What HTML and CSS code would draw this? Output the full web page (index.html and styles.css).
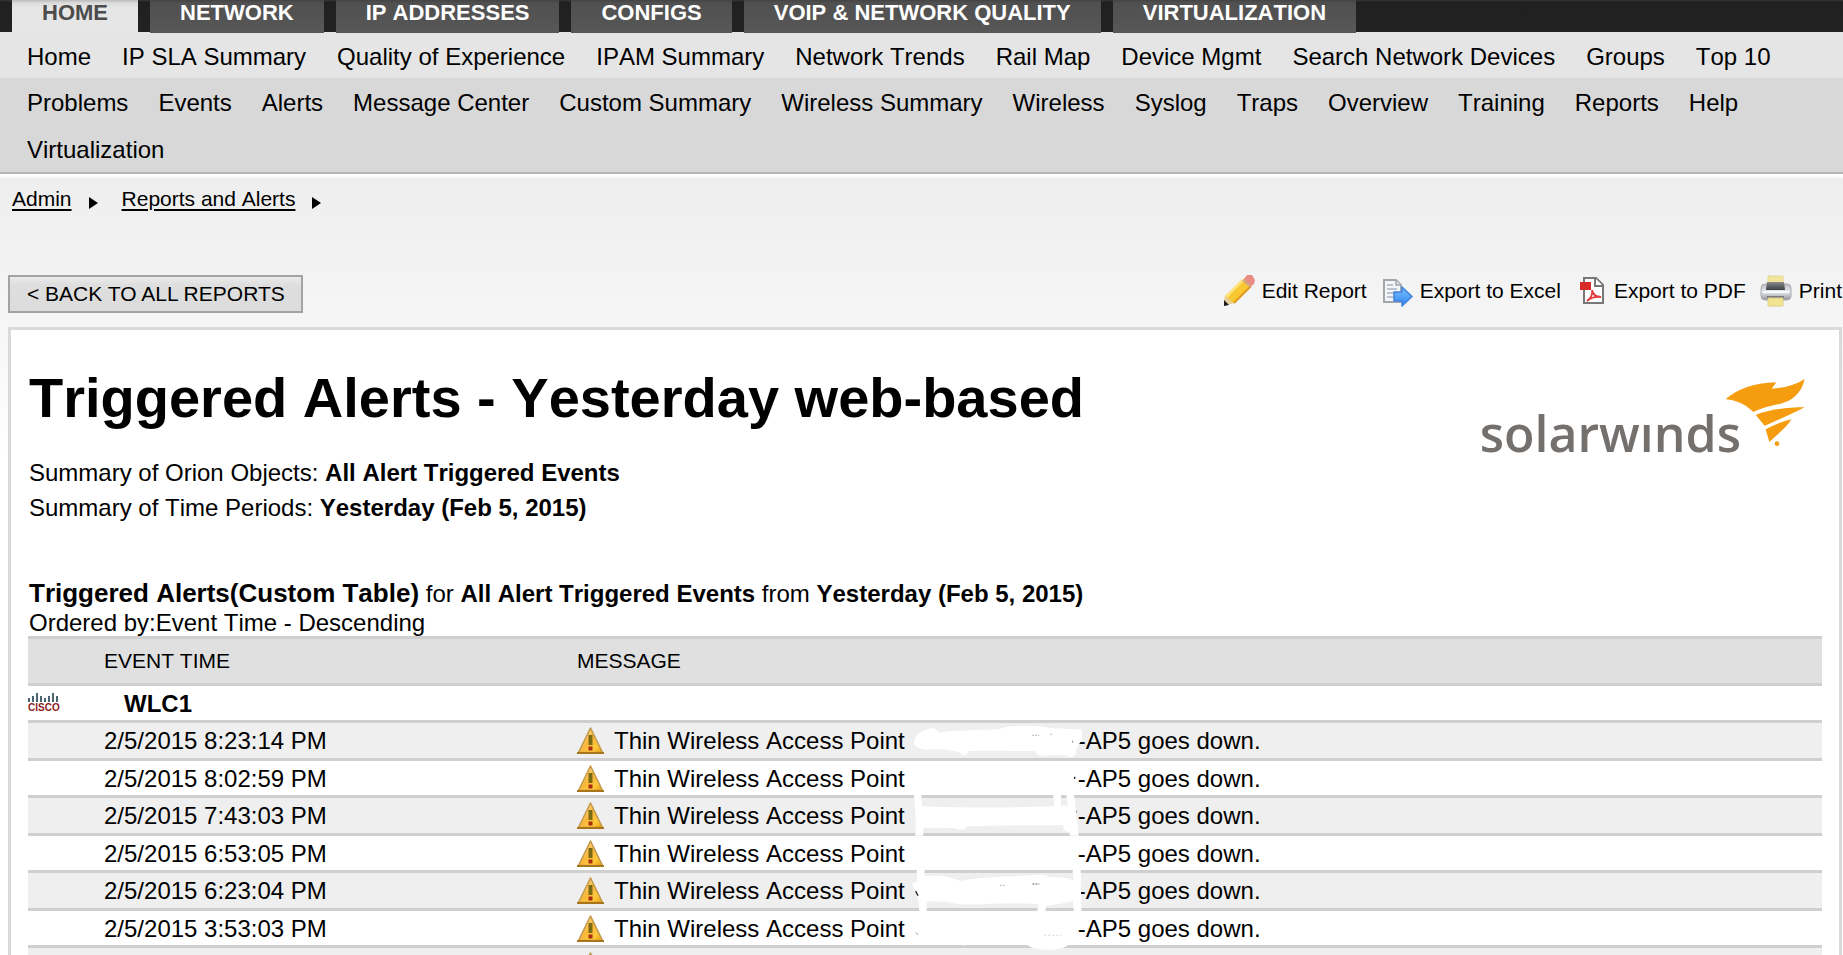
FILE: index.html
```html
<!DOCTYPE html>
<html lang="en">
<head>
<meta charset="utf-8">
<title>Triggered Alerts - Yesterday web-based</title>
<link rel="stylesheet" href="styles.css">
</head>
<body>
<svg class="defs" width="0" height="0" aria-hidden="true">
  <defs>
    <linearGradient id="warn-fill" x1="0" y1="0" x2="1" y2="1">
      <stop offset="0" stop-color="#ffe9a0"/><stop offset=".5" stop-color="#fbb63c"/><stop offset=".75" stop-color="#ffc93a"/><stop offset="1" stop-color="#e89a08"/>
    </linearGradient>
    <linearGradient id="arrow-fill" x1="0" y1="0" x2="0" y2="1">
      <stop offset="0" stop-color="#7cc0ff"/><stop offset="1" stop-color="#2f86ee"/>
    </linearGradient>
    <linearGradient id="printer-body" x1="0" y1="0" x2="0" y2="1">
      <stop offset="0" stop-color="#b9bbc2"/><stop offset=".5" stop-color="#e8e9ee"/><stop offset="1" stop-color="#8f9198"/>
    </linearGradient>
    <linearGradient id="printer-slot" x1="0" y1="0" x2="0" y2="1">
      <stop offset="0" stop-color="#8a8c8c"/><stop offset="1" stop-color="#3c4044"/>
    </linearGradient>
    <symbol id="warn" viewBox="0 0 27 27">
      <path d="M13.5 1 25.5 25.5H1.5Z" fill="url(#warn-fill)" stroke="#c29a50" stroke-width="1.6" stroke-linejoin="round"/>
      <path d="M0 26H27" stroke="#a8741c" stroke-width="2"/>
      <path d="M11.500 8h4v10h-4z" fill="#7a6a14"/>
      <path d="M11.500 19.500h4v4h-4z" fill="#a82c10"/>
    </symbol>
    <symbol id="crumb" viewBox="0 0 9 14">
      <path d="M0 0 9 6 0 12Z"/>
    </symbol>
  </defs>
</svg>
<header class="header">
  <nav class="tabs" aria-label="Modules">
    <a class="tab tab-active" href="#">HOME</a>
    <a class="tab" href="#">NETWORK</a>
    <a class="tab" href="#">IP ADDRESSES</a>
    <a class="tab" href="#">CONFIGS</a>
    <a class="tab" href="#">VOIP &amp; NETWORK QUALITY</a>
    <a class="tab" href="#">VIRTUALIZATION</a>
  </nav>
  <nav class="views views-light" aria-label="Views">
    <a href="#">Home</a><a href="#">IP SLA Summary</a><a href="#">Quality of Experience</a><a href="#">IPAM Summary</a><a href="#">Network Trends</a><a href="#">Rail Map</a><a href="#">Device Mgmt</a><a href="#">Search Network Devices</a><a href="#">Groups</a><a href="#">Top 10</a>
  </nav>
  <nav class="views views-dark" aria-label="More views">
    <a href="#">Problems</a><a href="#">Events</a><a href="#">Alerts</a><a href="#">Message Center</a><a href="#">Custom Summary</a><a href="#">Wireless Summary</a><a href="#">Wireless</a><a href="#">Syslog</a><a href="#">Traps</a><a href="#">Overview</a><a href="#">Training</a><a href="#">Reports</a><a href="#">Help</a><a href="#">Virtualization</a>
  </nav>
</header>
<main class="page">
  <nav class="crumbs" aria-label="Breadcrumb">
    <a href="#">Admin</a>
    <svg width="9" height="14" aria-hidden="true"><use href="#crumb"/></svg>
    <a href="#">Reports and Alerts</a>
    <svg width="9" height="14" aria-hidden="true"><use href="#crumb"/></svg>
  </nav>
  <div class="toolbar">
    <button class="back" type="button">&lt; BACK TO ALL REPORTS</button>
    <div class="actions">
      <a href="#">
        <svg width="32" height="32" viewBox="0 0 32 32" aria-hidden="true">
          <path d="M23 2 31 8 11 28 1 30 2 21Z" fill="#f9c72f"/>
          <path d="M20 5 3 22" stroke="#ffe27a" stroke-width="3"/>
          <path d="M28 11 11 28" stroke="#dd9a1c" stroke-width="2"/>
          <path d="M2 21 11 28 1 31Z" fill="#e9cf9a"/>
          <path d="M1 25 6 30 1 31Z" fill="#1c1c1c"/>
          <path d="M21 4 24 0H29L32 5 31 9 28 11Z" fill="#e98d84"/>
          <path d="M20 5 28 12" stroke="#c9a58c" stroke-width="2"/>
        </svg>Edit Report</a>
      <a href="#">
        <svg width="32" height="32" viewBox="0 0 32 32" aria-hidden="true">
          <path d="M3 5H15L20 10V27H3Z" fill="#f4f5f7" stroke="#a2a7ae" stroke-width="2"/>
          <path d="M15 5V10H20" fill="#dfe3e8" stroke="#a2a7ae" stroke-width="1.5"/>
          <path d="M6 10h6M6 14h10M6 18h7M6 22h7" stroke="#b9c4d0" stroke-width="2"/>
          <path d="M13 17H21V12L31 21.500 21 31V26H13Z" fill="url(#arrow-fill)" stroke="#3f82dc" stroke-width="1.5" stroke-linejoin="round"/>
        </svg>Export to Excel</a>
      <a href="#">
        <svg width="32" height="32" viewBox="0 0 32 32" aria-hidden="true">
          <path d="M9 3H21L28 10V28H9Z" fill="#fff" stroke="#777" stroke-width="2"/>
          <path d="M20 3V11H28" fill="#fff" stroke="#777" stroke-width="2"/>
          <path d="M5 7H16V15H5Z" fill="#d92a2a"/>
          <path d="M12 26C16 23 18 20 17 15C18 20 21 22 26 22C21 21 15 23 12 26Z" fill="none" stroke="#e33a3a" stroke-width="1.8"/>
        </svg>Export to PDF</a>
      <a href="#">
        <svg width="32" height="32" viewBox="0 0 32 32" aria-hidden="true">
          <path d="M8 1H23V10H8Z" fill="#f3e69c" stroke="#e2d78f"/>
          <rect x="1" y="9" width="30" height="16" rx="4" fill="url(#printer-body)" stroke="#a9abb2"/>
          <path d="M7 7H24L25 15H6Z" fill="url(#printer-slot)"/>
          <path d="M3 17H29" stroke="#fafafc" stroke-width="2"/>
          <path d="M7 21H24V24H7Z" fill="#777a80"/>
          <path d="M8 23H23V31H8Z" fill="#f1e38f" stroke="#ddd088"/>
        </svg>Print</a>
    </div>
  </div>
  <section class="report">
    <div class="report-head">
      <div class="summary">
        <h1>Triggered Alerts - Yesterday web-based</h1>
        <p>Summary of Orion Objects: <b>All Alert Triggered Events</b></p>
        <p>Summary of Time Periods: <b>Yesterday (Feb 5, 2015)</b></p>
      </div>
      <div class="logo">
        <span class="logo-name">solarwınds</span>
        <svg width="80" height="70" viewBox="765 40 240 210" fill="#f59d0e" aria-hidden="true">
          <path d="M767 103C800 76 850 54 919 53L905 72C940 70 975 62 1004 43C994 88 966 108 932 117C900 124 872 131 850 142C826 118 800 108 767 103Z"/>
          <path d="M857 151C900 134 950 128 1004 128C960 150 920 168 884 183Z"/>
          <path d="M887 194C912 180 940 170 964 164C952 186 925 206 898 232Z"/>
          <circle cx="921" cy="237" r="7"/>
        </svg>
      </div>
    </div>
    <div class="block-title">
      <h2>Triggered Alerts(Custom Table)</h2> for <b>All Alert Triggered Events</b> from <b>Yesterday (Feb 5, 2015)</b>
    </div>
    <div class="ordered">Ordered by:Event Time - Descending</div>
    <div class="table-wrap">
      <table>
        <colgroup><col class="col-icon"><col class="col-time"><col></colgroup>
        <thead>
          <tr><th></th><th scope="col">EVENT TIME</th><th scope="col">MESSAGE</th></tr>
        </thead>
        <tbody>
          <tr class="group"><td colspan="3"><div class="node">
            <svg width="32" height="20" viewBox="0 0 32 20" aria-hidden="true">
              <path d="M1 5V9M5 3V9M9 0V9M13 3V9M17 5V9M21 3V9M25 0V9M29 3V9" stroke="#4b6472" stroke-width="2"/>
              <text x="0" y="18" class="vendor">CISCO</text>
            </svg>WLC1</div></td></tr>
          <tr><td></td><td>2/5/2015 8:23:14 PM</td><td><div class="message"><svg width="27" height="27" aria-hidden="true"><use href="#warn"/></svg>Thin Wireless Access Point<span class="redacted"></span>-AP5 goes down.</div></td></tr>
          <tr><td></td><td>2/5/2015 8:02:59 PM</td><td><div class="message"><svg width="27" height="27" aria-hidden="true"><use href="#warn"/></svg>Thin Wireless Access Point<span class="redacted"></span>-AP5 goes down.</div></td></tr>
          <tr><td></td><td>2/5/2015 7:43:03 PM</td><td><div class="message"><svg width="27" height="27" aria-hidden="true"><use href="#warn"/></svg>Thin Wireless Access Point<span class="redacted"></span>-AP5 goes down.</div></td></tr>
          <tr><td></td><td>2/5/2015 6:53:05 PM</td><td><div class="message"><svg width="27" height="27" aria-hidden="true"><use href="#warn"/></svg>Thin Wireless Access Point<span class="redacted"></span>-AP5 goes down.</div></td></tr>
          <tr><td></td><td>2/5/2015 6:23:04 PM</td><td><div class="message"><svg width="27" height="27" aria-hidden="true"><use href="#warn"/></svg>Thin Wireless Access Point<span class="redacted"></span>-AP5 goes down.</div></td></tr>
          <tr><td></td><td>2/5/2015 3:53:03 PM</td><td><div class="message"><svg width="27" height="27" aria-hidden="true"><use href="#warn"/></svg>Thin Wireless Access Point<span class="redacted"></span>-AP5 goes down.</div></td></tr>
          <tr><td></td><td></td><td><div class="message"><svg width="27" height="27" aria-hidden="true"><use href="#warn"/></svg></div></td></tr>
        </tbody>
      </table>
      <svg class="scribble" width="175" height="235" viewBox="30 27 525 705" aria-hidden="true">
        <g fill="#fff">
          <path d="M42 92C46 66 70 58 95 52C112 50 108 62 120 64C180 56 240 58 300 54C320 40 400 42 450 50C490 52 520 56 546 54V88C536 100 528 110 526 130C520 142 504 140 500 134C480 128 440 136 420 134C410 132 412 124 400 120C330 120 260 118 206 120C202 136 184 138 178 124C140 112 110 116 80 116C56 114 42 106 42 92Z"/>
          <path d="M42 248H64L66 286C160 290 300 292 460 286C466 276 458 262 460 248H484L482 284H504L498 248H522L528 300L536 374H510L508 362C496 364 488 354 490 342C400 344 300 342 202 346C196 358 172 358 164 352C120 348 90 352 70 350V374H46L48 340Z"/>
          <path d="M50 474H74V496C110 492 150 496 180 510C230 500 290 498 340 496C400 492 430 486 450 498C480 498 500 500 520 508L518 474H542L544 600H522L518 570C490 578 460 582 438 584L436 600H412L416 580C340 572 260 582 180 580C150 576 140 570 80 572L80 600H58L54 560L36 518L52 512Z"/>
          <path d="M376 696H508C500 712 470 718 430 716C400 714 384 706 376 696ZM178 696H206C200 706 184 706 178 696Z"/>
        </g>
        <path d="M396 73H418M450 70H458M300 523H318" stroke="#999" stroke-width="2" stroke-dasharray="6 3"/>
        <path d="M398 519H418" stroke="#444" stroke-width="3" stroke-dasharray="5 4"/>
        <path d="M47 540L54 554M524 197V204" stroke="#222" stroke-width="4"/>
        <path d="M518 88V96M530 298V306M48 664L54 672" stroke="#a8a48c" stroke-width="3"/>
        <path d="M434 673H484" stroke="#aaa" stroke-width="2" stroke-dasharray="4 8"/>
      </svg>
    </div>
  </section>
</main>
</body>
</html>
```
FILE: styles.css
```css
* { box-sizing: border-box; }

body {
  margin: 0;
  height: 100vh;
  overflow: hidden;
  background: #fff;
  color: #000;
  font-family: "Liberation Sans", Arial, sans-serif;
  font-size: 24px;
  font-kerning: none;
}

a { color: inherit; text-decoration: none; }

.defs { position: absolute; }

/* Header */
.header { border-bottom: 2px solid #b5b5b5; }

.tabs {
  display: flex;
  align-items: flex-start;
  gap: 12px;
  padding-left: 12px;
  background: linear-gradient(#383838, #202020 2px, #222);
}

.tab {
  position: relative;
  margin-bottom: -1px;
  padding: 0 30px 8px;
  background: linear-gradient(#444, #505050 3px, #575757);
  color: #fff;
  font-size: 22px;
  font-weight: bold;
  line-height: 25px;
}

.tab-active {
  background: linear-gradient(#bbb, #dcdcdc 3px, #e6e6e6 8px);
  color: #4c4c4c;
}

.views {
  display: flex;
  flex-wrap: wrap;
  padding: 0 27px;
}

.views a { padding-top: 3px; }

.views-light { column-gap: 31px; background: #e5e5e5; line-height: 43px; }

.views-dark { column-gap: 30px; background: #d8d8d8; line-height: 44px; }

/* Page */
.page {
  padding: 13px 1px 0 8px;
  background: linear-gradient(#fff, #fff 2px, #eee 5px, #f4f4f4 120px, #fff 280px);
}

.crumbs {
  display: flex;
  align-items: flex-end;
  padding-left: 4px;
  font-size: 21px;
  line-height: 24px;
}

.crumbs a { text-decoration: underline; text-decoration-thickness: 2px; text-underline-offset: 3px; }

.crumbs svg { margin: 0 24px 0 17px; }

.toolbar {
  display: flex;
  align-items: flex-start;
  justify-content: space-between;
  margin-top: 64px;
  font-size: 21px;
}

.back {
  height: 38px;
  padding: 0 16px 0 17px;
  border: 2px solid #a3a3a3;
  border-radius: 0;
  background: linear-gradient(#ebebeb, #dedede 8px, #dcdcdc);
  color: #000;
  font: inherit;
  font-kerning: normal;
}

.actions { display: flex; gap: 14px; }

.actions a { display: flex; align-items: center; gap: 7px; }

.report {
  margin-top: 14px;
  padding: 36px 17px 20px;
  border: 3px solid #dadada;
  background: #fff;
}

.report-head { display: flex; justify-content: space-between; }

.summary, .block-title, .ordered { padding-left: 1px; }

h1 { margin: 0 0 25px; font-size: 56px; line-height: 64px; }

p { margin: 0; line-height: 35px; }

.logo { display: flex; align-items: flex-start; padding: 12px 17px 0 0; }

.logo-name {
  margin: 29px -16px 0 0;
  color: #74706e;
  font-family: "Open Sans", "Noto Sans", sans-serif;
  font-size: 50px;
  font-weight: 600;
  line-height: 52px;
}

.block-title { margin-top: 53px; line-height: 30px; }

h2 { display: inline; margin: 0; font-size: 26px; }

.ordered { line-height: 27px; }

/* Results table */
.table-wrap { position: relative; }

table { width: 100%; border-spacing: 0; table-layout: fixed; }

.col-icon { width: 76px; }

.col-time { width: 473px; }

th {
  height: 50px;
  padding: 0;
  border-top: 3px solid #cfcfcf;
  border-bottom: 3px solid #cfcfcf;
  background: #e0e0e0;
  font-size: 21px;
  font-weight: normal;
  text-align: left;
}

td { height: 37px; padding: 0; border-bottom: 3px solid #cfcfcf; line-height: 27px; }

tbody tr:nth-child(even) td { height: 38px; background: #efefef; }

.node { display: flex; align-items: center; gap: 64px; font-weight: bold; }

.vendor { fill: #8c1d22; font-size: 10px; font-weight: bold; }

.message { display: flex; align-items: center; }

.message svg { margin-right: 10px; }

.redacted { width: 173px; }

.scribble { position: absolute; top: 84px; left: 882px; }
```
